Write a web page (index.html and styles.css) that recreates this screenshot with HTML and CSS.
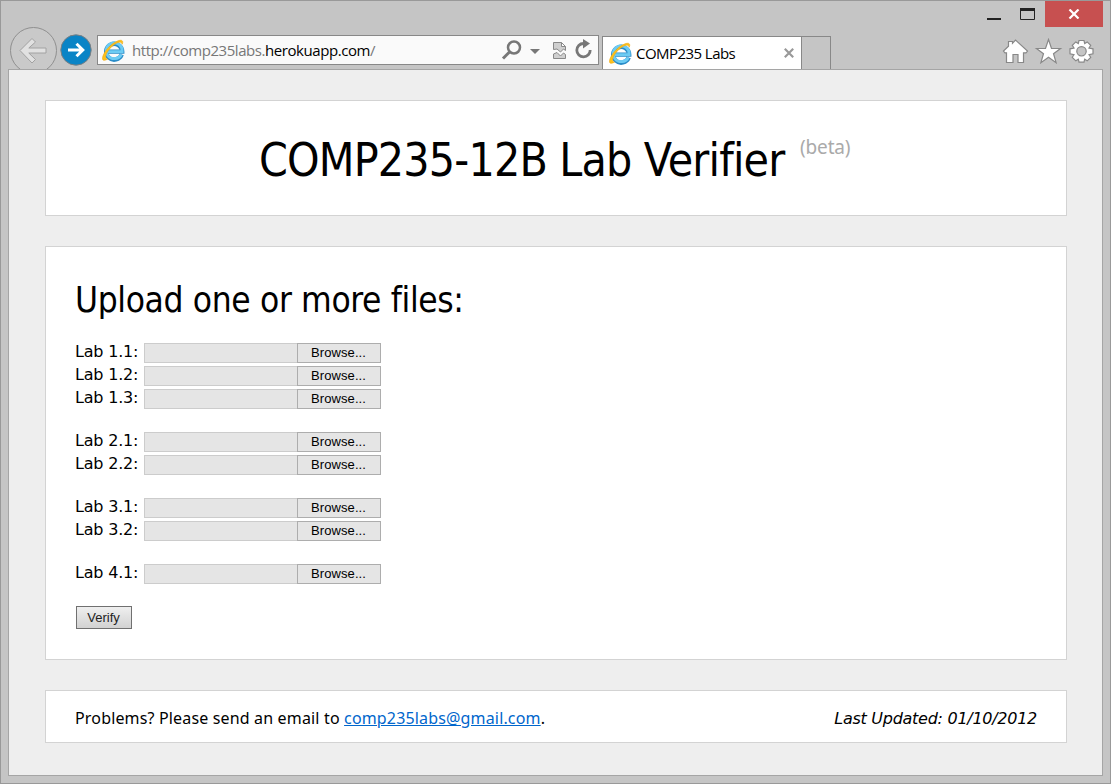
FILE: index.html
```html
<!DOCTYPE html>
<html lang="en">
<head>
<meta charset="utf-8">
<title>COMP235 Labs</title>
<link rel="stylesheet" href="styles.css">
</head>
<body>
<svg class="defs" width="0" height="0" aria-hidden="true">
  <defs>
    <symbol id="ie" viewBox="0 0 24 24">
      <path d="M20.700 16.500A8 7.900 0 1 1 21.200 13.600H7" fill="none" stroke="#2a8cc8" stroke-width="4.400"/>
      <path d="M20.300 16.500A8 7.900 0 1 1 21.200 13.600H7" fill="none" stroke="#6ccbf3" stroke-width="2.800"/>
      <path d="M21.300 6.200c1.500-4-1-5.200-6.400-2.400C7.500 7.500 1 16.600 1.500 21c.3 2 2.600 1.500 5 .2C3.600 20.800 4 16.500 8.500 11 13 5.600 20 1.500 21.300 6.200z" fill="#fcc21b" stroke="#f0a818" stroke-width=".6"/>
    </symbol>
  </defs>
</svg>
<div class="window">
  <header class="chrome">
    <div class="back">
      <svg width="48" height="48" viewBox="0 0 48 48"><circle cx="24.500" cy="23.500" r="23" fill="#c9c9c9" stroke="#8f8f8f"/><path d="M11 23.500 23 11.500l3.500 3.500-6.700 6H37v5H19.800l6.700 6.500-3.500 3.500z" fill="#e1e1e1" stroke="#a2a2a2"/></svg>
    </div>
    <svg class="forward" width="32" height="32" viewBox="0 0 32 32"><circle cx="16" cy="16" r="15.200" fill="#0a84c6" stroke="#7b7f82"/><path d="M8 16h14M16.500 9.700l6.300 6.300-6.300 6.300" fill="none" stroke="#fff" stroke-width="3"/></svg>
    <div class="address">
      <svg class="ie" width="24" height="24"><use href="#ie"/></svg>
      <span class="url">http://comp235labs.<b>herokuapp.com</b>/</span>
      <svg class="tools" width="94" height="22" viewBox="0 0 94 22" fill="none" stroke="#777">
        <circle cx="13" cy="8.500" r="6" stroke-width="2.500"/><path d="M8.500 13 2 19.500" stroke-width="3"/>
        <path d="M29 10h10l-5 5z" fill="#777" stroke="none"/>
        <path d="M52.500 10.500V3.500h8l4 4v4l-2-1.500-3 3-3.500-3zM60.500 3.500v4h4M52.500 15v4.500h12V15.500l-2-1.500-3 3-3.500-3.500z" fill="#cfcfcf" stroke="#888"/>
        <path d="M82.500 4.500a6.700 6.700 0 1 0 6.700 6.500" stroke-width="2.800"/><path d="M82 0l7 4.500-7 5z" fill="#777" stroke="none"/>
      </svg>
    </div>
    <div class="tab">
      <svg class="ie" width="24" height="24"><use href="#ie"/></svg>
      <span class="tab-title">COMP235 Labs</span>
      <svg class="tab-close" width="10" height="10" viewBox="0 0 10 10"><path d="M.8.8l8.400 8.400M9.200.8.800 9.200" stroke="#999" stroke-width="2.200"/></svg>
    </div>
    <div class="new-tab"></div>
    <div class="corner">
      <div class="controls">
        <svg width="60" height="26" viewBox="0 1 60 26"><path d="M2 18h14v2H2z" fill="#222"/><path d="M35.500 10v9.500h14V10" fill="none" stroke="#222"/><path d="M35 8h15v3H35z" fill="#222"/></svg>
        <div class="close"><svg width="12" height="10" viewBox="0 0 12 10"><path d="M1.500.5l9 9M10.500.5l-9 9" stroke="#fff" stroke-width="2.200"/></svg></div>
      </div>
      <svg class="actions" width="94" height="26" viewBox="0 0 94 26" fill="#fff" stroke="#888" stroke-width="1.200">
        <path d="M1.500 13 6.500 8.300V3.500h4v1.800L13.500 2l12 11-1.500 1.800h-2.500v9.700h-5.500v-8h-5v8h-6.500v-9.700H3z"/>
        <path d="M46.500 1.500l3 9h9l-7 5.200 2.600 9-7.600-5.400-7.600 5.400 2.600-9-7-5.200h9z"/>
        <path d="M77 2.500h5l.7 3 2.500-1.600 3.500 3.500L87 10l4 .8v5l-4 .8 1.700 2.700-3.500 3.500-2.500-1.600-.7 3h-5l-.7-3-2.500 1.600-3.500-3.500 1.700-2.700-4-.8v-5l4-.8-1.700-2.600 3.500-3.500 2.500 1.600z"/><circle cx="79.500" cy="13.300" r="4.700" fill="#c5c5c5"/>
      </svg>
    </div>
  </header>
  <main class="page">
    <section class="card banner"><h1>COMP235-12B Lab Verifier</h1><span class="beta">(beta)</span></section>
    <section class="card upload">
      <h2>Upload one or more files:</h2>
      <div class="group">
        <div class="row"><span class="label">Lab 1.1:</span><span class="field"></span><button class="browse">Browse...</button></div>
        <div class="row"><span class="label">Lab 1.2:</span><span class="field"></span><button class="browse">Browse...</button></div>
        <div class="row"><span class="label">Lab 1.3:</span><span class="field"></span><button class="browse">Browse...</button></div>
      </div>
      <div class="group">
        <div class="row"><span class="label">Lab 2.1:</span><span class="field"></span><button class="browse">Browse...</button></div>
        <div class="row"><span class="label">Lab 2.2:</span><span class="field"></span><button class="browse">Browse...</button></div>
      </div>
      <div class="group">
        <div class="row"><span class="label">Lab 3.1:</span><span class="field"></span><button class="browse">Browse...</button></div>
        <div class="row"><span class="label">Lab 3.2:</span><span class="field"></span><button class="browse">Browse...</button></div>
      </div>
      <div class="group">
        <div class="row"><span class="label">Lab 4.1:</span><span class="field"></span><button class="browse">Browse...</button></div>
      </div>
      <button class="verify">Verify</button>
    </section>
    <footer class="card foot"><span class="contact">Problems? Please send an email to <a href="mailto:comp235labs@gmail.com">comp235labs@gmail.com</a>.</span><em class="updated">Last Updated: 01/10/2012</em></footer>
  </main>
</div>
</body>
</html>
```
FILE: styles.css
```css
* { box-sizing: border-box; }
body { margin: 0; font: 16px/20px Tahoma, "Noto Sans", "DejaVu Sans", sans-serif; color: #000; }
svg { display: block; flex: none; }
.defs { position: absolute; }
.window { width: 1111px; height: 784px; border: 1px solid #999; background: #c5c5c5; padding: 0 7px 7px; display: flex; flex-direction: column; overflow: hidden; }
.chrome { height: 68px; display: flex; align-items: flex-end; flex: none; }
.back { width: 48px; height: 42px; overflow: hidden; margin-left: 1px; }
.forward { margin: 0 0 3px 3px; }
.address { width: 502px; height: 30px; margin: 0 0 4px 5px; border: 1px solid #888; background: #fafafa; display: flex; align-items: center; padding-left: 3px; }
.url { font: 15px/20px "Open Sans", "Noto Sans", sans-serif; color: #777; margin-left: 7px; width: 369px; white-space: nowrap; letter-spacing: -.44px; }
.url b { font-weight: 400; color: #000; }
.tab { width: 200px; height: 33px; margin-left: 3px; border: 1px solid #888; border-bottom: 0; background: #fff; display: flex; align-items: center; padding: 0 7px 0 5px; }
.tab-title { font: 15px/20px "Open Sans", "Noto Sans", sans-serif; margin-left: 4px; letter-spacing: -.55px; flex: 1; white-space: nowrap; }
.new-tab { width: 29px; height: 33px; border: 1px solid #888; border-width: 1px 1px 0 0; }
.corner { margin-left: auto; height: 68px; display: flex; flex-direction: column; align-items: flex-end; }
.controls { display: flex; }
.close { width: 58px; height: 26px; background: #c75050; display: flex; align-items: center; justify-content: center; }
.actions { margin: 11px 7px 0 0; }
.page { flex: 1; width: 1095px; background: #eee; border: 1px solid #a5a5a5; padding: 30px 35px 0 36px; display: flex; flex-direction: column; gap: 30px; }
.card { background: #fff; border: 1px solid #d3d3d3; width: 1022px; flex: none; }
.banner { height: 116px; display: flex; padding-left: 213px; }
h1, h2 { font-family: Tahoma, "DejaVu Sans Condensed", "DejaVu Sans", sans-serif; font-stretch: condensed; font-weight: 400; margin: 0; white-space: nowrap; }
h1 { font-size: 46px; line-height: 56px; margin-top: 31px; width: 541px; letter-spacing: -.83px; }
.beta { font-size: 19px; line-height: 24px; color: #aaa; margin-top: 34px; letter-spacing: -.15px; }
.upload { height: 414px; padding: 31px 30px 0 29px; }
h2 { font-size: 35px; line-height: 44px; letter-spacing: -.36px; }
.group { margin-top: 20px; }
.row { height: 23px; display: flex; align-items: flex-start; }
.label { font-family: "DejaVu Sans", sans-serif; width: 69px; line-height: 20px; white-space: nowrap; letter-spacing: -.2px; }
.field { width: 153px; height: 20px; margin-top: 1px; background: #e5e5e5; border: 1px solid #ccc; border-right: 0; }
.browse { width: 84px; height: 20px; margin-top: 1px; padding: 0 1px 0 0; background: #e5e5e5; border: 1px solid #adadad; font: 13px/16px "Liberation Sans", sans-serif; letter-spacing: .1px; color: #000; }
.verify { display: block; width: 56px; height: 23px; margin: 20px 0 0 1px; padding: 0 1px 0 0; border: 1px solid #707070; background: linear-gradient(#efefef, #d2d2d2); font: 13px/18px "Liberation Sans", sans-serif; color: #222; }
.foot { height: 53px; padding: 17px 29px 0; display: flex; justify-content: space-between; white-space: nowrap; }
.contact { letter-spacing: .16px; }
.updated { font-family: "DejaVu Sans", sans-serif; letter-spacing: -.27px; margin-top: 1px; }
.foot a { color: #0066cc; }
```
